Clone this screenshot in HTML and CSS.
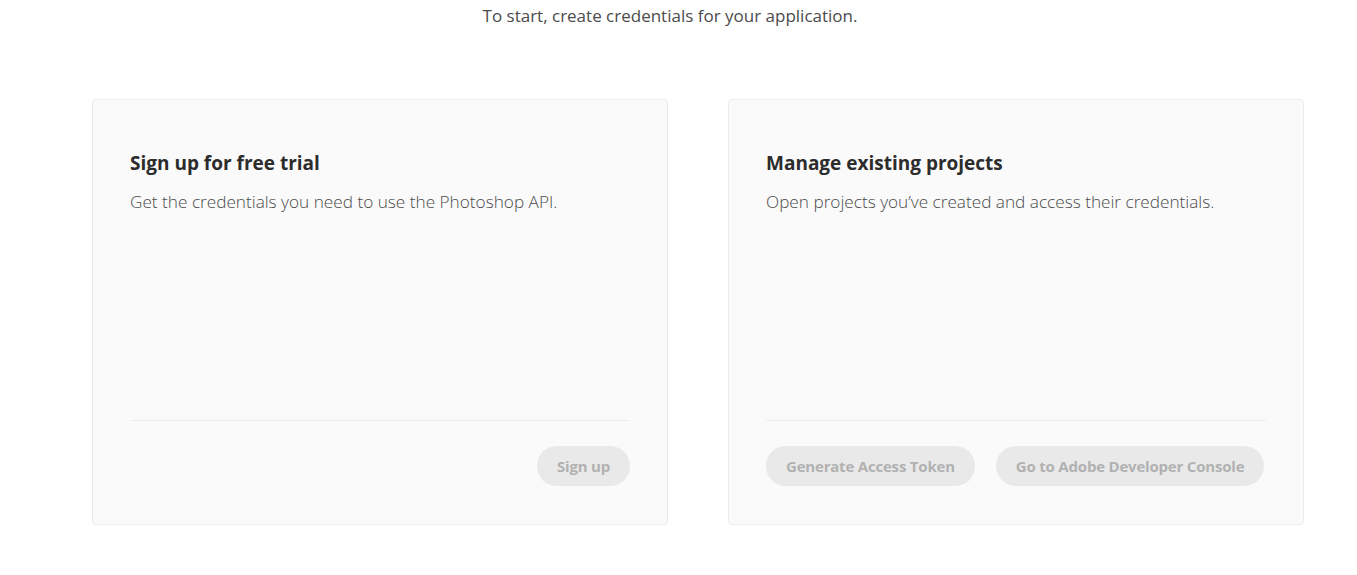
FILE: index.html
```html
<!DOCTYPE html>
<html>
<head>
<meta charset="utf-8">
<link rel="stylesheet" href="styles.css">
</head>
<body>
<div class="page">
  <p class="intro">To start, create credentials for your application.</p>
  <div class="cards">
    <section class="card">
      <h2 class="card-title">Sign up for free trial</h2>
      <p class="card-desc">Get the credentials you need to use the Photoshop API.</p>
      <div class="card-foot">
        <button class="btn">Sign up</button>
      </div>
    </section>
    <section class="card">
      <h2 class="card-title">Manage existing projects</h2>
      <p class="card-desc">Open projects you’ve created and access their credentials.</p>
      <div class="card-foot card-foot-left">
        <button class="btn">Generate Access Token</button>
        <button class="btn">Go to Adobe Developer Console</button>
      </div>
    </section>
  </div>
</div>
</body>
</html>
```
FILE: styles.css
```css
html, body {
  margin: 0;
  padding: 0;
  background: #ffffff;
}
body {
  font-family: "Open Sans", "Noto Sans", sans-serif;
  color: #2c2c2c;
}
.page {
  width: 1357px;
  height: 575px;
  overflow: hidden;
}
.intro {
  margin: 0;
  padding-top: 4px;
  padding-right: 17px;
  text-align: center;
  font-size: 17px;
  line-height: 24px;
  color: #4b4b4b;
}
.cards {
  display: flex;
  gap: 60px;
  padding: 71px 0 0 92px;
}
.card {
  width: 576px;
  height: 426px;
  box-sizing: border-box;
  background: #fafafa;
  border: 1px solid #ececec;
  border-radius: 4px;
  padding: 48px 37px 38px 37px;
  display: flex;
  flex-direction: column;
}
.card-title {
  margin: 0;
  font-size: 19px;
  line-height: 30px;
  font-weight: 700;
  color: #2c2c2c;
}
.card-desc {
  margin: 12px 0 0 0;
  font-size: 17.2px;
  line-height: 24px;
  font-weight: 300;
  color: #4b4b4b;
}
.card-foot {
  margin-top: auto;
  border-top: 1px solid #ececec;
  padding-top: 25px;
  display: flex;
  justify-content: flex-end;
  gap: 21px;
}
.card-foot-left {
  justify-content: flex-start;
}
.btn {
  flex-shrink: 0;
  white-space: nowrap;
  height: 40px;
  padding: 0 20px;
  border: none;
  border-radius: 20px;
  background: #e9e9e9;
  color: #b1b1b1;
  font-family: "Open Sans", "Noto Sans", sans-serif;
  font-size: 15px;
  font-weight: 700;
  letter-spacing: -0.2px;
  cursor: default;
}
```
